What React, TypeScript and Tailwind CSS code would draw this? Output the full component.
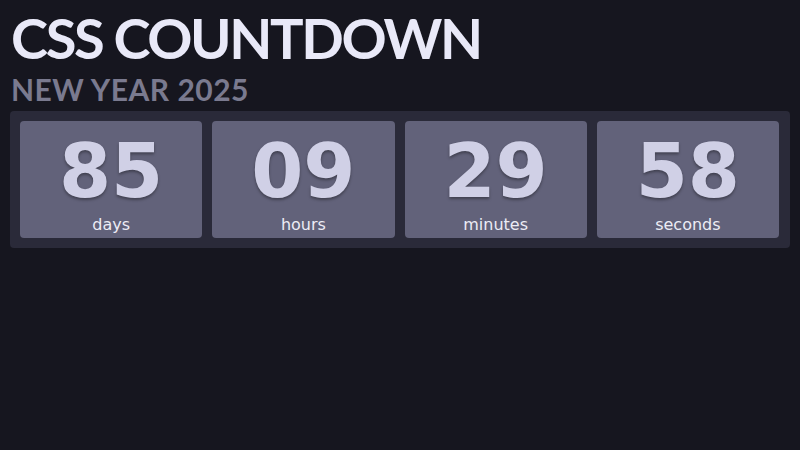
import React from "react";

const units = [
  { value: "85", label: "days" },
  { value: "09", label: "hours" },
  { value: "29", label: "minutes" },
  { value: "58", label: "seconds" },
];

export default function App() {
  return (
    <div className="w-[800px] h-[450px] bg-[#16161f] px-[10px] pt-[6px] overflow-hidden">
      <h1 className="font-['Lato',sans-serif] font-bold text-[56px] leading-[64px] tracking-[-2.4px] text-[#e9e9f8] pl-[1px]">
        CSS COUNTDOWN
      </h1>
      <h2 className="font-['Lato',sans-serif] font-bold text-[30px] leading-[36px] tracking-[0.5px] text-[#7a7a8f] pl-[1px] mt-[1px]">
        NEW YEAR 2025
      </h2>
      <div className="mt-[4px] bg-[#2a2a39] rounded-[4px] pl-[10px] pr-[11px] py-[10px] grid grid-cols-4 gap-[10px]">
        {units.map((u) => (
          <div
            key={u.label}
            className="h-[117px] bg-[#62627a] rounded-[4px] flex flex-col items-center pt-[8px]"
          >
            <div className="font-['DejaVu_Sans',sans-serif] font-bold text-[75px] leading-[84px] text-[#d0d0e6] [text-shadow:0_2px_3px_rgba(0,0,0,0.35)]">
              {u.value}
            </div>
            <div className="font-['DejaVu_Sans',sans-serif] text-[16px] leading-[22px] text-[#ececf5] mt-[1px]">
              {u.label}
            </div>
          </div>
        ))}
      </div>
    </div>
  );
}
